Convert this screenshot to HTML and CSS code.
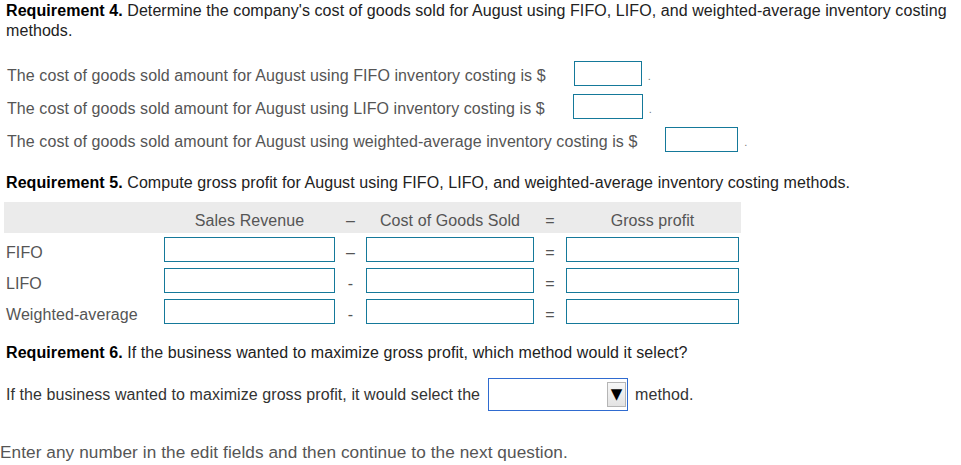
FILE: index.html
```html
<!DOCTYPE html>
<html lang="en">
<head>
<meta charset="utf-8">
<title>Requirements 4-6</title>
<link rel="stylesheet" href="styles.css">
</head>
<body>
<div class="page">
  <p class="req req-4"><b>Requirement 4.</b> Determine the company's cost of goods sold for August using FIFO, LIFO, and weighted-average inventory costing methods.</p>

  <div class="answers">
    <div class="answer">
      <span class="answer-text">The cost of goods sold amount for August using FIFO inventory costing is $</span>
      <input class="field field-s1" type="text" aria-label="FIFO cost of goods sold">
      <span class="dot">.</span>
    </div>
    <div class="answer">
      <span class="answer-text">The cost of goods sold amount for August using LIFO inventory costing is $</span>
      <input class="field field-s2" type="text" aria-label="LIFO cost of goods sold">
      <span class="dot">.</span>
    </div>
    <div class="answer">
      <span class="answer-text">The cost of goods sold amount for August using weighted-average inventory costing is $</span>
      <input class="field field-s3" type="text" aria-label="Weighted-average cost of goods sold">
      <span class="dot">.</span>
    </div>
  </div>

  <p class="req req-5"><b>Requirement 5.</b> Compute gross profit for August using FIFO, LIFO, and weighted-average inventory costing methods.</p>

  <div class="gp-table">
    <div class="gp-row gp-head">
      <span class="gp-label"></span>
      <span class="gp-col">Sales Revenue</span>
      <span class="gp-op">–</span>
      <span class="gp-col">Cost of Goods Sold</span>
      <span class="gp-op">=</span>
      <span class="gp-col">Gross profit</span>
    </div>
    <div class="gp-row gp-body">
      <span class="gp-label">FIFO</span>
      <input class="field" type="text" aria-label="FIFO sales revenue">
      <span class="gp-op">–</span>
      <input class="field" type="text" aria-label="FIFO cost of goods sold">
      <span class="gp-op">=</span>
      <input class="field" type="text" aria-label="FIFO gross profit">
    </div>
    <div class="gp-row gp-body">
      <span class="gp-label">LIFO</span>
      <input class="field" type="text" aria-label="LIFO sales revenue">
      <span class="gp-op">-</span>
      <input class="field" type="text" aria-label="LIFO cost of goods sold">
      <span class="gp-op">=</span>
      <input class="field" type="text" aria-label="LIFO gross profit">
    </div>
    <div class="gp-row gp-body">
      <span class="gp-label">Weighted-average</span>
      <input class="field" type="text" aria-label="Weighted-average sales revenue">
      <span class="gp-op">-</span>
      <input class="field" type="text" aria-label="Weighted-average cost of goods sold">
      <span class="gp-op">=</span>
      <input class="field" type="text" aria-label="Weighted-average gross profit">
    </div>
  </div>

  <p class="req req-6"><b>Requirement 6.</b> If the business wanted to maximize gross profit, which method would it select?</p>

  <div class="select-line">
    <span>If the business wanted to maximize gross profit, it would select the</span>
    <span class="dropdown" role="combobox" aria-label="Method">
      <span class="dropdown-btn">▼</span>
    </span>
    <span>method.</span>
  </div>

  <p class="footer-note">Enter any number in the edit fields and then continue to the next question.</p>
</div>
</body>
</html>
```

FILE: styles.css
```css
html, body {
  margin: 0;
  padding: 0;
  background: #ffffff;
}

body {
  font-family: "Liberation Sans", Arial, sans-serif;
  font-size: 16px;
  color: #333333;
  letter-spacing: 0.08px;
}

.page {
  padding: 0 0 0 6px;
}

.req {
  margin: 0;
  line-height: 20px;
  color: #222222;
}

.req-4 {
  padding-top: 1px;
}

.req b {
  color: #000000;
}

.answers {
  margin-top: 20px;
  display: flex;
  flex-direction: column;
  gap: 8px;
}

.answer {
  display: flex;
  align-items: flex-end;
  height: 25px;
  padding-left: 1px;
  color: #555555;
  line-height: 20px;
}

.field {
  display: block;
  box-sizing: border-box;
  height: 25px;
  margin: 0;
  padding: 0;
  border: 1px solid #15799a;
  border-radius: 0;
  background: #ffffff;
  font: inherit;
}

.answer .field {
  margin-left: 28px;
}

.field-s1 { width: 68px; }
.field-s2 { width: 70px; }
.field-s3 { width: 73px; }

.dot {
  margin-left: 6px;
  font-size: 11px;
  color: #777777;
}

.req-5 {
  margin-top: 21px;
}

.gp-table {
  margin: 9px 0 0 -2px;
  width: 737px;
}

.gp-row {
  display: grid;
  grid-template-columns: 160px 171px 31px 168px 32px 173px;
  color: #555555;
}

.gp-head {
  height: 31px;
  background: #ebebeb;
  align-items: center;
  line-height: 20px;
}

.gp-head .gp-col,
.gp-head .gp-op {
  padding-top: 7px;
}

.gp-body {
  height: 25px;
  margin-top: 6px;
  line-height: 18px;
}

.gp-head + .gp-body {
  margin-top: 4px;
}

.gp-label {
  padding-left: 2px;
  align-self: end;
}

.gp-col {
  text-align: center;
}

.gp-op {
  text-align: center;
  align-self: end;
}

.gp-head .gp-op {
  align-self: center;
}

.req-6 {
  margin-top: 19px;
}

.select-line {
  margin-top: 15px;
  display: flex;
  align-items: center;
  height: 33px;
  color: #333333;
}

.dropdown {
  box-sizing: border-box;
  width: 140px;
  height: 33px;
  margin: 0 7px 0 8px;
  border: 1px solid #2f6bd0;
  background: #ffffff;
  display: flex;
  justify-content: flex-end;
  align-items: center;
  padding-right: 1px;
}

.dropdown-btn {
  box-sizing: border-box;
  width: 19px;
  height: 25px;
  border: 1px solid #b5b5b5;
  background: linear-gradient(#f7f7f7, #e3e3e3);
  color: #000000;
  font-family: "DejaVu Sans", sans-serif;
  font-size: 15px;
  line-height: 22px;
  text-align: center;
  letter-spacing: 0;
}

.footer-note {
  margin: 31px 0 0 -6px;
  font-size: 17.2px;
  line-height: 20px;
  color: #555555;
}
```
